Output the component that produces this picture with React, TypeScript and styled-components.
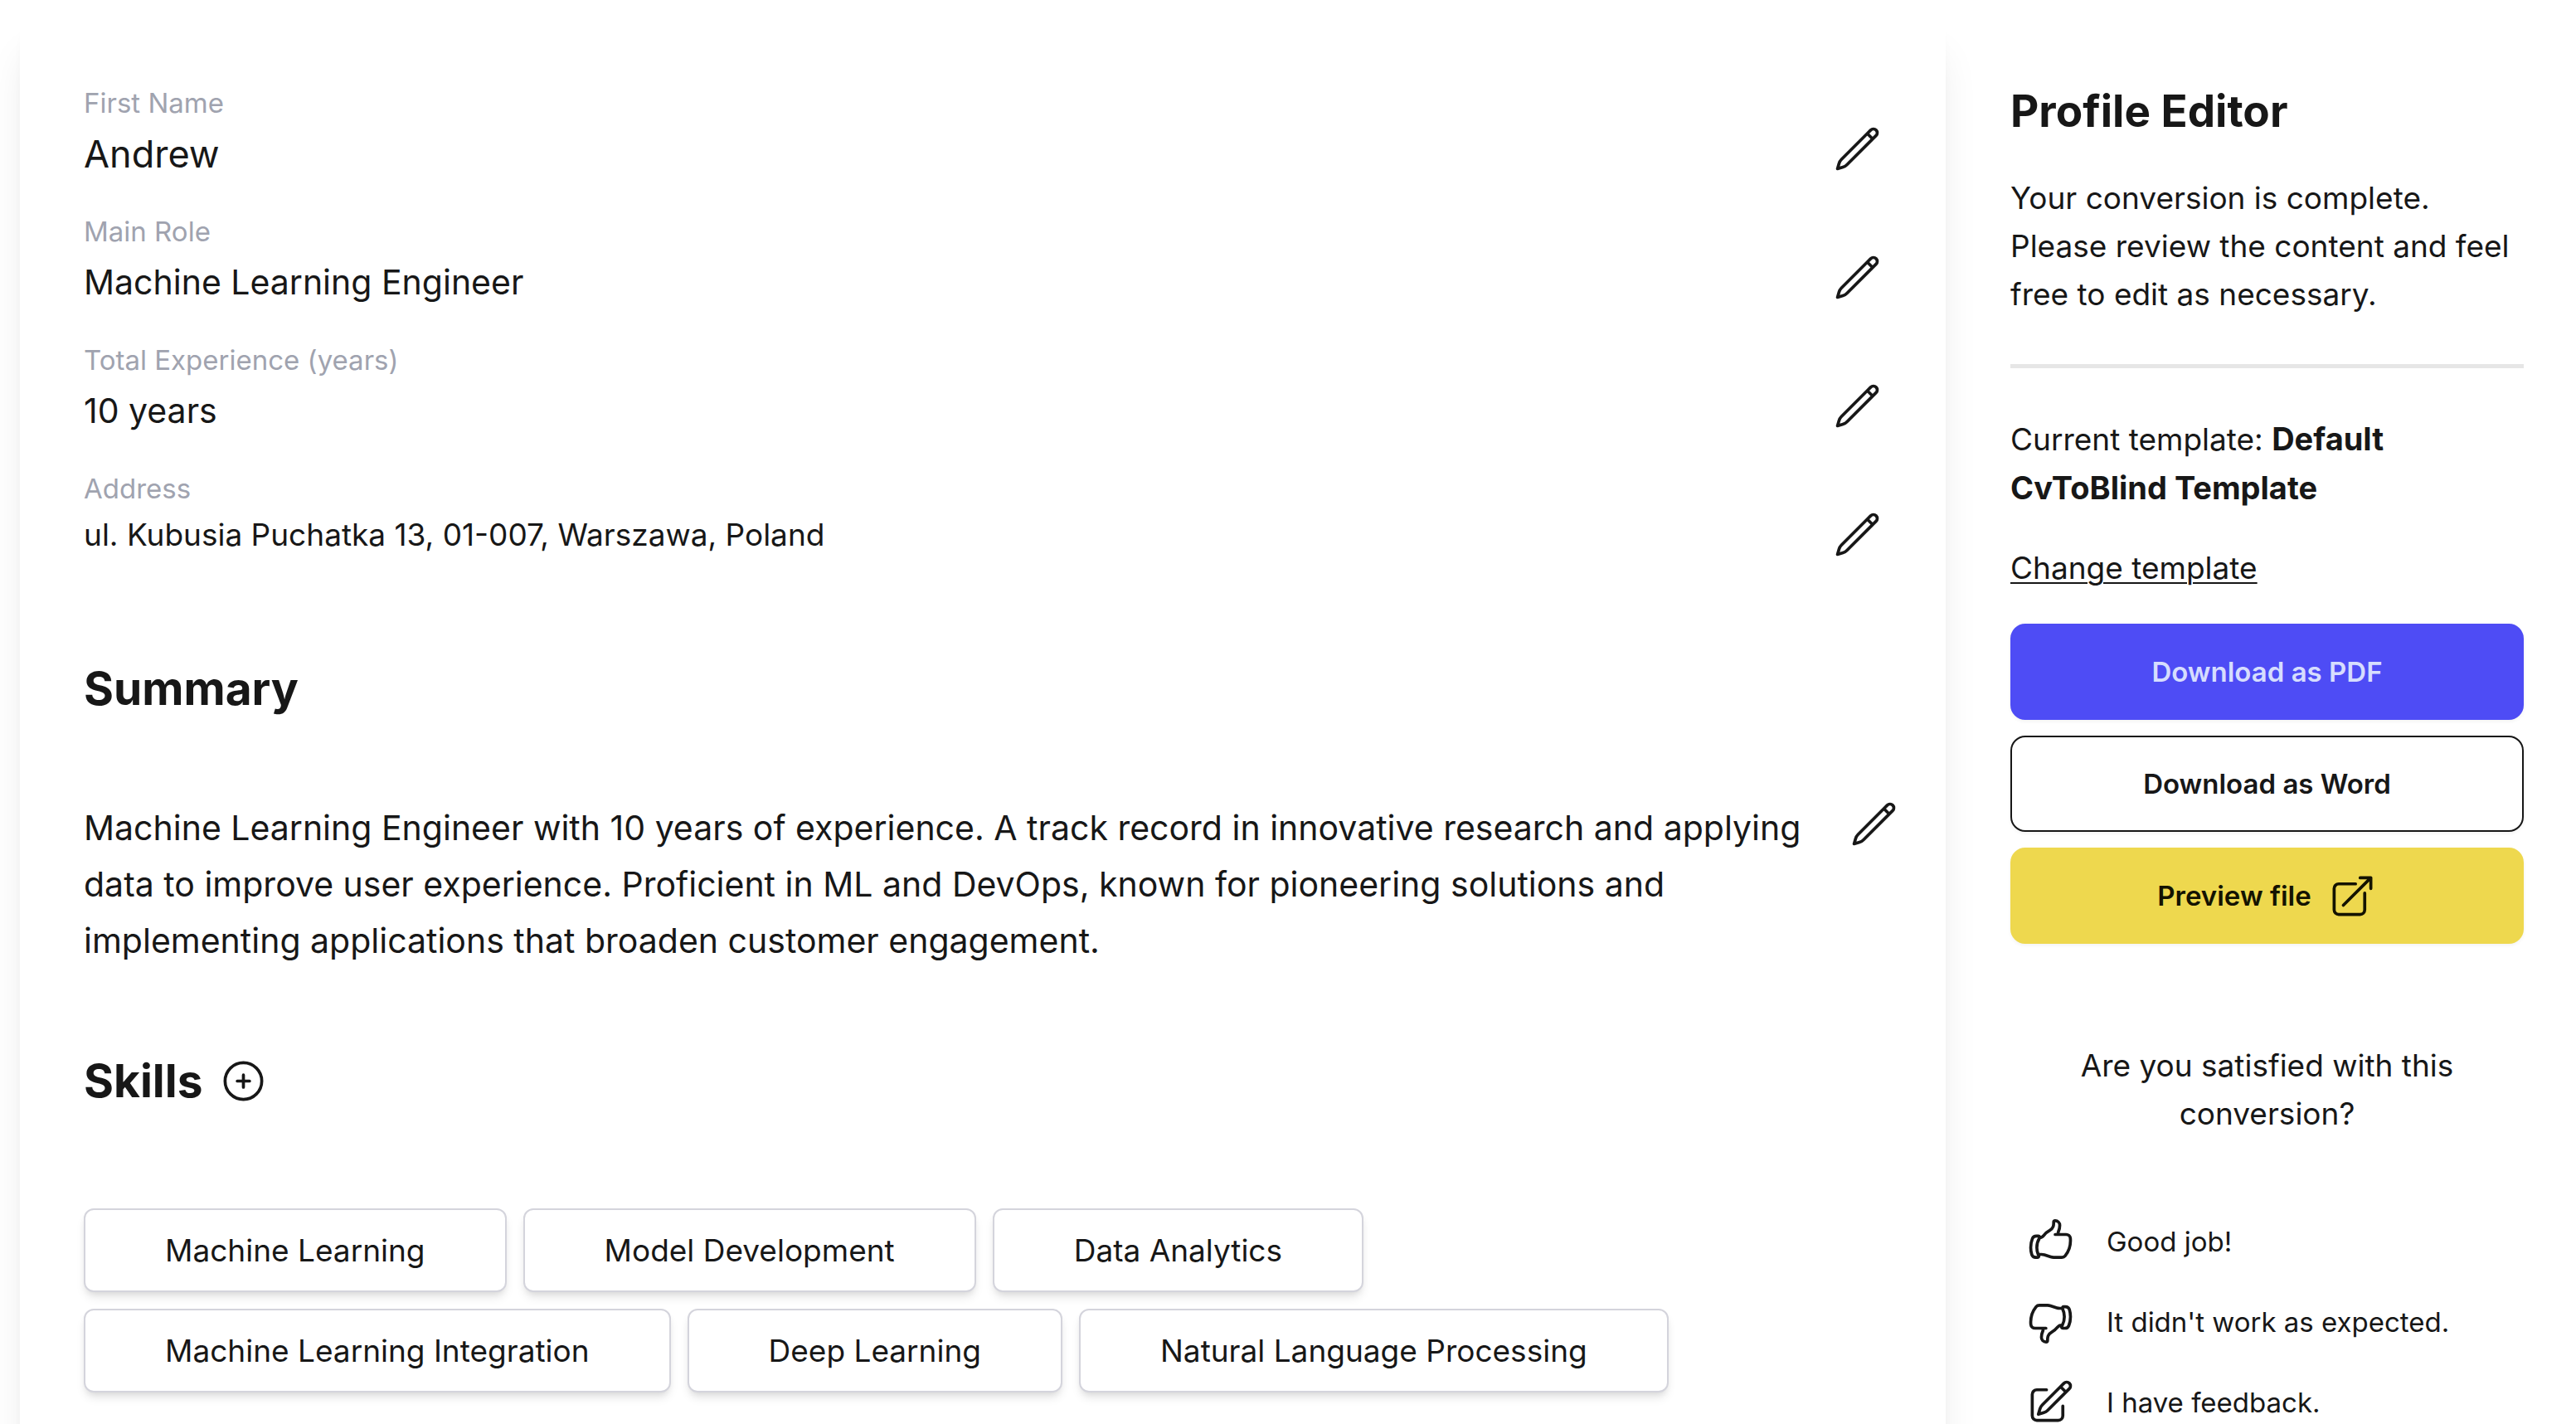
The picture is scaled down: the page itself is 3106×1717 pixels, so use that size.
import React from 'react';
import styled, { createGlobalStyle, css } from 'styled-components';
import {
  HiOutlineArrowTopRightOnSquare,
  HiOutlineHandThumbDown,
  HiOutlineHandThumbUp,
  HiOutlinePencil,
  HiOutlinePencilSquare,
  HiOutlinePlusCircle,
} from 'react-icons/hi2';

const ink = '#171717';

const GlobalStyle = createGlobalStyle`
  *, *::before, *::after { box-sizing: border-box; }
  body {
    margin: 0;
    background: #ffffff;
    color: ${ink};
    font-family: Inter, "Liberation Sans", sans-serif;
    font-size: 37px;
    line-height: 58px;
  }
  h1, h2, p, ul, dl, dd { margin: 0; padding: 0; }
  ul { list-style: none; }
  button { font: inherit; color: inherit; cursor: pointer; }
`;

const Page = styled.div`
  display: grid;
  grid-template-columns: minmax(0, 1fr) 760px;
  padding: 20px 0 0 24px;
`;

const Panel = styled.main`
  padding: 80px 57px 80px 77px;
  background: #ffffff;
  border-radius: 16px;
  box-shadow:
    0 40px 50px -10px rgba(0, 0, 0, 0.1),
    0 16px 20px -12px rgba(0, 0, 0, 0.1);
`;

const Fields = styled.dl`
  margin-right: 20px;
`;

const Field = styled.div`
  display: flex;
  justify-content: space-between;
  align-items: flex-start;
  height: 155px;
`;

const FieldLabel = styled.dt`
  color: #a0a3af;
  font-size: 33px;
  line-height: 48px;
`;

type Size = 'large' | 'medium' | 'small';

const valueSizes = {
  large: css`
    font-size: 45px;
    line-height: 76px;
  `,
  medium: css`
    font-size: 41px;
    line-height: 74px;
  `,
  small: css`
    font-size: 37px;
    line-height: 64px;
  `,
};

const FieldValue = styled.dd<{ $size: Size }>`
  ${({ $size }) => valueSizes[$size]}
`;

const IconButton = styled.button`
  display: flex;
  flex: none;
  padding: 0;
  border: 0;
  background: none;
  font-size: 59px;

  ${Field} & {
    margin-top: 50px;
  }
`;

const SectionHead = styled.div<{ $before: number; $after: number }>`
  display: flex;
  align-items: center;
  gap: 20px;
  height: 64px;
  margin: ${({ $before, $after }) => `${$before}px 0 ${$after}px`};
`;

const SectionTitle = styled.h2`
  font-size: 55px;
  line-height: 64px;
  font-weight: 700;
`;

const SummaryRow = styled.div`
  display: flex;
  align-items: flex-start;
  justify-content: space-between;
  gap: 40px;
`;

const SummaryText = styled.p`
  font-size: 41px;
  line-height: 68px;
`;

const Skills = styled.ul`
  display: flex;
  flex-wrap: wrap;
  gap: 20px;
  max-width: 2040px;
`;

const Skill = styled.li`
  padding: 20px 96px 19px;
  border: 2px solid #d4d4dc;
  border-radius: 12px;
  background: #ffffff;
  box-shadow:
    0 8px 12px -2px rgba(0, 0, 0, 0.1),
    0 4px 8px -4px rgba(0, 0, 0, 0.1);
`;

const Sidebar = styled.aside`
  padding: 82px 63px 0 78px;
`;

const Title = styled.h1`
  margin-bottom: 44px;
  font-size: 53px;
  line-height: 64px;
  font-weight: 700;
`;

const Divider = styled.hr`
  height: 5px;
  margin: 55px 0 56px;
  border: 0;
  background: #e6e6e6;
`;

const TemplateName = styled.strong`
  font-size: 38px;
  font-weight: 700;
`;

const ChangeLink = styled.a`
  display: block;
  width: fit-content;
  margin: 38px 0;
  color: inherit;
  text-decoration: underline;
  text-decoration-thickness: 2px;
  text-underline-offset: 4px;
`;

const Actions = styled.div`
  display: grid;
  gap: 19px;
`;

const actionTones = {
  primary: css`
    background: #4e4cf5;
    border-color: #4e4cf5;
    color: #d6ddfe;
  `,
  outline: css`
    background: #ffffff;
    border-color: ${ink};
  `,
  accent: css`
    background: #eed84e;
    border-color: #eed84e;
    color: #141300;
  `,
};

const Action = styled.button<{ $tone: keyof typeof actionTones }>`
  display: flex;
  align-items: center;
  justify-content: center;
  gap: 20px;
  height: 116px;
  border: 2px solid;
  border-radius: 18px;
  box-shadow: 0 2px 4px rgba(0, 0, 0, 0.05);
  ${({ $tone }) => actionTones[$tone]}

  && {
    font-size: 33px;
    font-weight: 600;
  }

  svg {
    font-size: 59px;
  }
`;

const Question = styled.p`
  margin: 118px 0 95px;
  text-align: center;
`;

const Feedback = styled.ul`
  display: grid;
  gap: 38px;
  padding-left: 19px;
`;

const FeedbackButton = styled.button`
  display: flex;
  align-items: center;
  gap: 38px;
  height: 59px;
  padding: 0;
  border: 0;
  background: none;

  && {
    font-size: 33px;
  }

  svg {
    font-size: 59px;
  }
`;

const fields: { label: string; value: string; size: Size }[] = [
  { label: 'First Name', value: 'Andrew', size: 'large' },
  { label: 'Main Role', value: 'Machine Learning Engineer', size: 'medium' },
  { label: 'Total Experience (years)', value: '10 years', size: 'medium' },
  { label: 'Address', value: 'ul. Kubusia Puchatka 13, 01-007, Warszawa, Poland', size: 'small' },
];

const skills = [
  'Machine Learning',
  'Model Development',
  'Data Analytics',
  'Machine Learning Integration',
  'Deep Learning',
  'Natural Language Processing',
];

const feedback = [
  { text: 'Good job!', Icon: HiOutlineHandThumbUp },
  { text: "It didn't work as expected.", Icon: HiOutlineHandThumbDown },
  { text: 'I have feedback.', Icon: HiOutlinePencilSquare },
];

export default function App() {
  return (
    <>
      <GlobalStyle />
      <Page>
        <Panel>
          <Fields>
            {fields.map(({ label, value, size }) => (
              <Field key={label}>
                <div>
                  <FieldLabel>{label}</FieldLabel>
                  <FieldValue $size={size}>{value}</FieldValue>
                </div>
                <IconButton type="button" aria-label={`Edit ${label}`}>
                  <HiOutlinePencil />
                </IconButton>
              </Field>
            ))}
          </Fields>

          <SectionHead $before={78} $after={102}>
            <SectionTitle>Summary</SectionTitle>
          </SectionHead>
          <SummaryRow>
            <SummaryText>
              Machine Learning Engineer with 10 years of experience. A track record in innovative
              research and applying data to improve user experience. Proficient in ML and DevOps,
              known for pioneering solutions and implementing applications that broaden customer
              engagement.
            </SummaryText>
            <IconButton type="button" aria-label="Edit summary">
              <HiOutlinePencil />
            </IconButton>
          </SummaryRow>

          <SectionHead $before={103} $after={122}>
            <SectionTitle>Skills</SectionTitle>
            <IconButton type="button" aria-label="Add skill">
              <HiOutlinePlusCircle />
            </IconButton>
          </SectionHead>
          <Skills>
            {skills.map((skill) => (
              <Skill key={skill}>{skill}</Skill>
            ))}
          </Skills>
        </Panel>

        <Sidebar>
          <Title>Profile Editor</Title>
          <p>
            Your conversion is complete. Please review the content and feel free to edit as
            necessary.
          </p>
          <Divider />
          <p>
            Current template: <TemplateName>Default CvToBlind Template</TemplateName>
          </p>
          <ChangeLink href="#template">Change template</ChangeLink>
          <Actions>
            <Action type="button" $tone="primary">
              Download as PDF
            </Action>
            <Action type="button" $tone="outline">
              Download as Word
            </Action>
            <Action type="button" $tone="accent">
              Preview file
              <HiOutlineArrowTopRightOnSquare />
            </Action>
          </Actions>
          <Question>Are you satisfied with this conversion?</Question>
          <Feedback>
            {feedback.map(({ text, Icon }) => (
              <li key={text}>
                <FeedbackButton type="button">
                  <Icon />
                  {text}
                </FeedbackButton>
              </li>
            ))}
          </Feedback>
        </Sidebar>
      </Page>
    </>
  );
}
